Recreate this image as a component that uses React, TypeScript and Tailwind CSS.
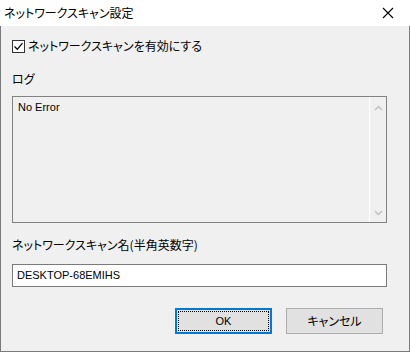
import React from 'react';

const jp = "font-['Noto_Sans_CJK_JP','Noto_Sans',sans-serif] [font-feature-settings:'palt']";

function ChevronUp() {
  return (
    <svg width="9" height="6" viewBox="0 0 9 6" className="block">
      <path d="M1 5 L4.5 1.5 L8 5" fill="none" stroke="#c4c4c4" strokeWidth="1.6" />
    </svg>
  );
}

function ChevronDown() {
  return (
    <svg width="9" height="6" viewBox="0 0 9 6" className="block">
      <path d="M1 1 L4.5 4.5 L8 1" fill="none" stroke="#c4c4c4" strokeWidth="1.6" />
    </svg>
  );
}

export default function App() {
  return (
    <div className={`w-[410px] h-[352px] bg-[#f0f0f0] flex flex-col text-[12px] text-black ${jp}`}>
      {/* タイトルバー */}
      <div className="h-[26px] bg-white flex items-center justify-between pl-[4px] pr-[16px]">
        <span className="text-[12px] leading-none">ネットワークスキャン設定</span>
        <svg width="12" height="12" viewBox="0 0 12 12">
          <path d="M1 1 L11 11 M11 1 L1 11" stroke="#000" strokeWidth="1.1" />
        </svg>
      </div>

      <div className="flex-1 border-x border-b border-[#7a7a7a] flex flex-col px-[11px]">
        <label className="flex items-center gap-[3px] mt-[13px] h-[14px]">
          <span className="w-[13px] h-[13px] border border-[#333] bg-white flex items-center justify-center">
            <svg width="11" height="11" viewBox="0 0 11 11">
              <path d="M1.5 5.5 L4.3 8.3 L9.5 2.2" fill="none" stroke="#000" strokeWidth="1.3" />
            </svg>
          </span>
          <span className="leading-none">ネットワークスキャンを有効にする</span>
        </label>

        <div className="mt-[20px] leading-none">ログ</div>

        <div className="mt-[11px] h-[127px] w-[375px] border border-[#828282] flex">
          <div className="flex-1 pl-[5px] pt-[3px] font-['Liberation_Sans',sans-serif] text-[11px] leading-[14px]">
            No Error
          </div>
          <div className="w-[17px] border-l border-white flex flex-col items-center justify-between pt-[8px] pb-[6px]">
            <ChevronUp />
            <ChevronDown />
          </div>
        </div>

        <div className="mt-[16px] leading-none">ネットワークスキャン名(半角英数字)</div>

        <div className="mt-[13px] h-[23px] w-[375px] border border-[#7a7a7a] bg-white flex items-center pl-[4px] font-['Liberation_Sans',sans-serif] text-[11px]">
          DESKTOP-68EMIHS
        </div>

        <div className="mt-[21px] flex justify-end gap-[14px] pr-[15px]">
          <button className="w-[97px] h-[26px] border-2 border-[#0078d7] bg-[#e1e1e1] p-[1px]">
            <span className="w-full h-full border border-dotted border-black flex items-center justify-center font-['Liberation_Sans',sans-serif] text-[11px]">
              OK
            </span>
          </button>
          <button className="w-[97px] h-[26px] border border-[#adadad] bg-[#e1e1e1] flex items-center justify-center">
            キャンセル
          </button>
        </div>
      </div>
    </div>
  );
}
